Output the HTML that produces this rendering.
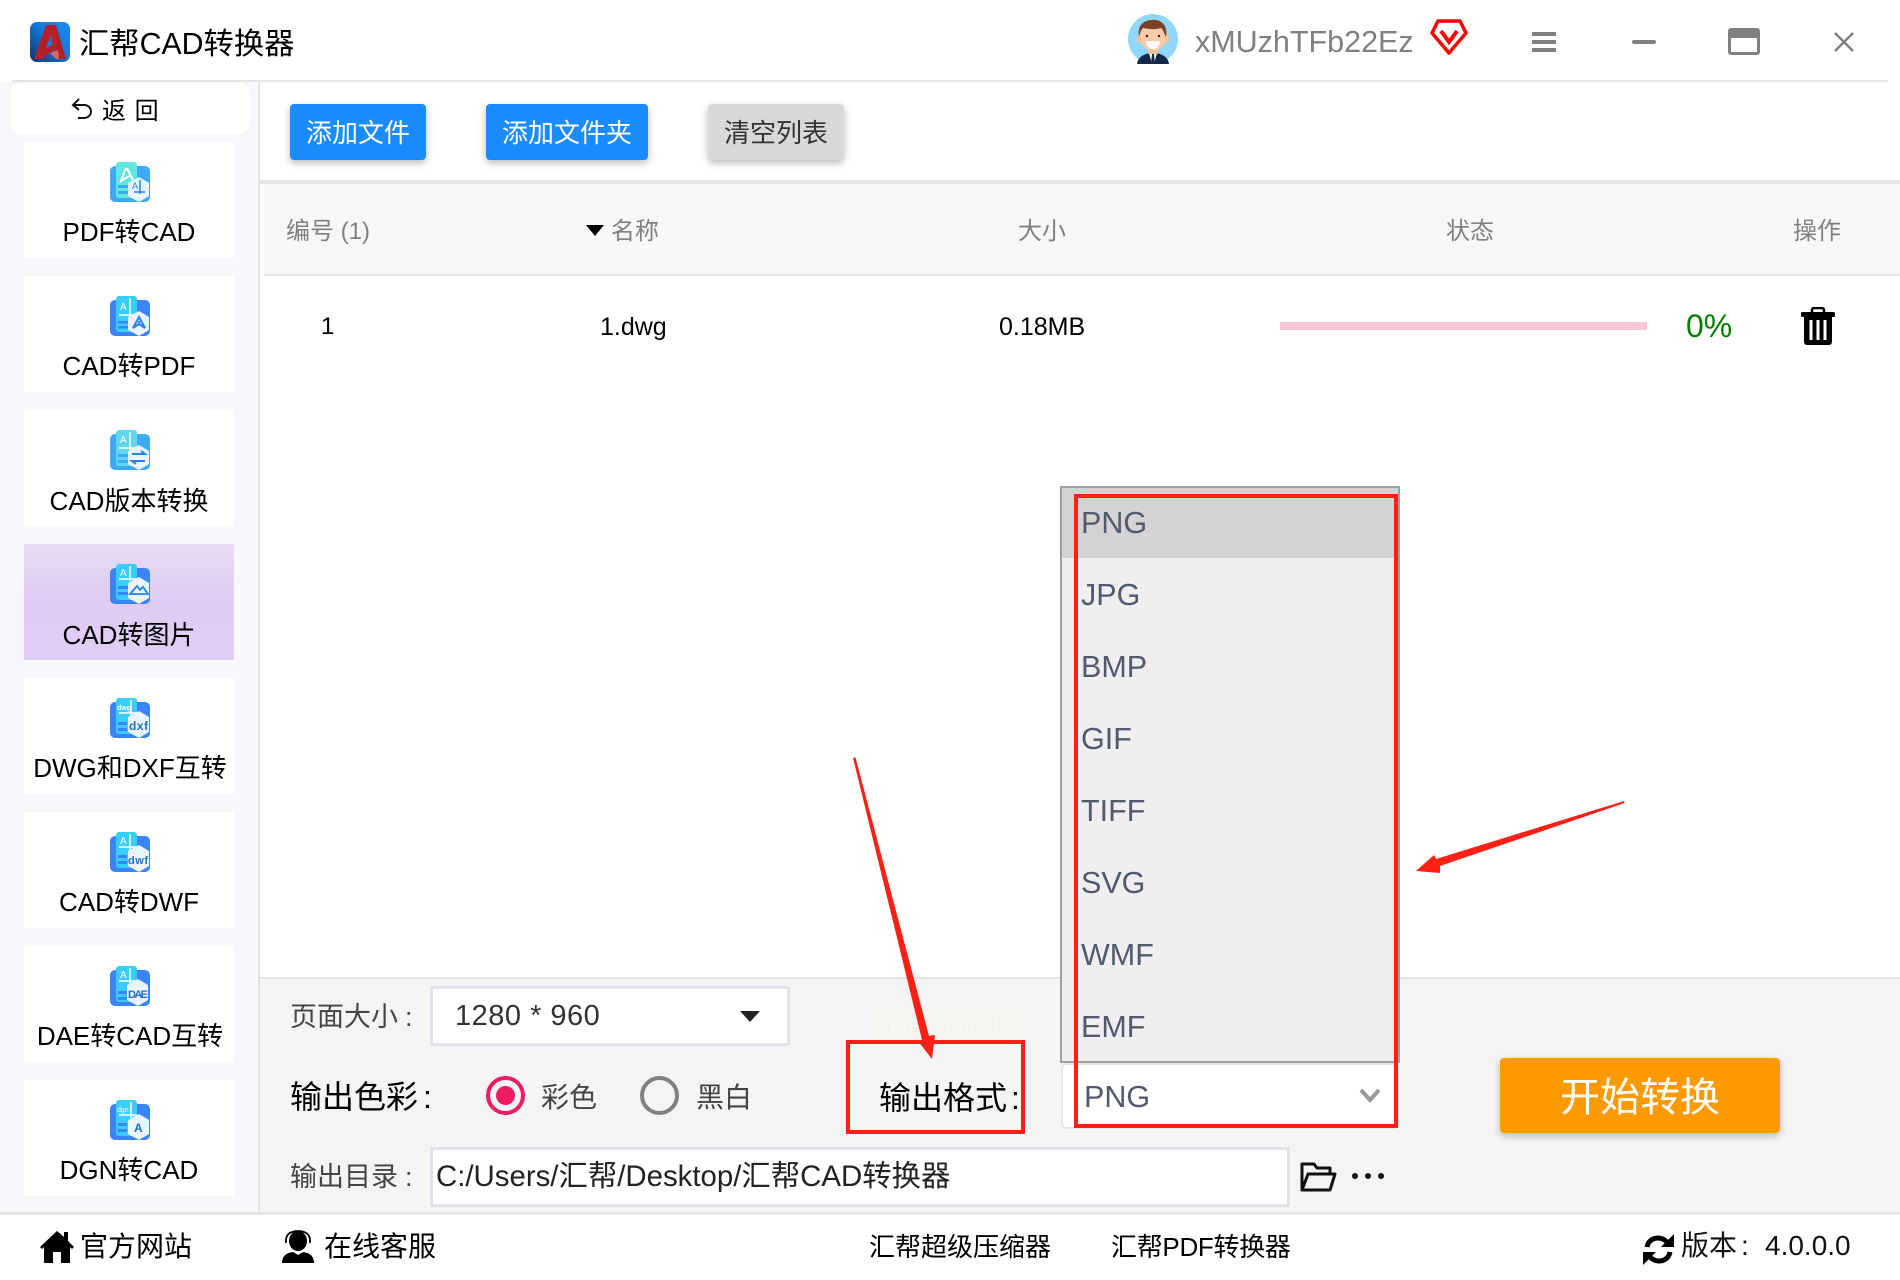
<!DOCTYPE html>
<html lang="zh-CN">
<head>
<meta charset="utf-8">
<title>汇帮CAD转换器</title>
<style>
html,body{margin:0;padding:0}
body{width:1900px;height:1280px;position:relative;overflow:hidden;background:#fff;font-family:"Liberation Sans","Noto Sans CJK SC",sans-serif;color:#000}
.a{position:absolute}
.t{position:absolute;white-space:nowrap;line-height:40px;height:40px}
.item{position:absolute;left:24px;width:210px;height:116px;background:#fff}
.item svg{position:absolute;left:86px;top:20px}
.item div{position:absolute;left:0;width:100%;top:70px;text-align:center;font-size:26px;line-height:40px;white-space:nowrap;color:#000}
.btn{position:absolute;top:104px;height:56px;border-radius:4px;line-height:58px;text-align:center;font-size:26px;box-shadow:0 3px 8px rgba(0,0,0,.28)}
.opt{position:absolute;left:1081px;font-size:30.5px;line-height:40px;color:#515a6e}
.h{color:#808080;font-size:24px}
</style>
</head>
<body>
<!-- Title bar -->
<svg class="a" style="left:30px;top:22px" width="40" height="40" viewBox="0 0 40 40">
<defs><linearGradient id="lg" x1="0" y1="1" x2="1" y2="0"><stop offset="0" stop-color="#07376b"/><stop offset=".55" stop-color="#1678dc"/><stop offset="1" stop-color="#1a8bf5"/></linearGradient></defs>
<rect width="40" height="40" rx="7" fill="url(#lg)"/>
<path d="M16 3h10l10 34H26l-2-9-5 3-6 6H4z" fill="#b3202a"/>
<path d="M21 13l-5 13 6-3z" fill="#1a7ee0"/>
<path d="M20 31l8-3 1 9h-3z" fill="#d9685f"/>
</svg>
<div class="t" style="left:79px;top:25px;font-size:30.3px">汇帮CAD转换器</div>

<svg class="a" style="left:1128px;top:14px" width="50" height="50" viewBox="0 0 50 50">
<circle cx="25" cy="25" r="25" fill="#8fd8fb"/>
<path d="M9 50c1-7 6-9 12-11h8c6 2 11 4 12 11z" fill="#13294b"/>
<path d="M21 39h8l-3 11h-2z" fill="#fff"/><path d="M24 40h2l1 10h-4z" fill="#13294b"/>
<rect x="20" y="31" width="10" height="9" fill="#f5bf9c"/>
<ellipse cx="25" cy="23" rx="13" ry="14" fill="#fbcaa8"/>
<rect x="9" y="21" width="4" height="8" rx="2" fill="#f5bf9c"/><rect x="37" y="21" width="4" height="8" rx="2" fill="#f5bf9c"/>
<path d="M11 23c-2-11 4-17 13-17 9-1 16 5 14 17-2-4-3-8-5-9-6 2-13 1-18 0-2 2-3 5-4 9z" fill="#7a4126"/>
<path d="M18 27h14c0 5-3 8-7 8s-7-3-7-8z" fill="#fff"/>
<circle cx="19" cy="22" r="1.2" fill="#3b2314"/><circle cx="31" cy="22" r="1.2" fill="#3b2314"/>
</svg>
<div class="t" style="left:1195px;top:22px;font-size:30.5px;color:#808080">xMUzhTFb22Ez</div>
<svg class="a" style="left:1430px;top:19px" width="38" height="36" viewBox="0 0 38 36">
<path d="M8 2h22l6 12-17 20L2 14z" fill="#fff" stroke="#ff0000" stroke-width="3.5" stroke-linejoin="round"/>
<path d="M11 12l8 11 8-11" fill="none" stroke="#ff0000" stroke-width="4"/>
</svg>
<div class="a" style="left:1532px;top:32px;width:24px;height:4px;background:#808080"></div>
<div class="a" style="left:1532px;top:40px;width:24px;height:4px;background:#808080"></div>
<div class="a" style="left:1532px;top:48px;width:24px;height:4px;background:#808080"></div>
<div class="a" style="left:1632px;top:40px;width:24px;height:4px;border-radius:2px;background:#808080"></div>
<div class="a" style="left:1728px;top:28px;width:26px;height:14px;border:3px solid #808080;border-top-width:10px;border-radius:3px"></div>
<svg class="a" style="left:1834px;top:32px" width="20" height="20" viewBox="0 0 20 20"><path d="M1 1l18 18M19 1L1 19" stroke="#808080" stroke-width="2.6"/></svg>
<div class="a" style="left:12px;top:80px;width:1876px;height:2px;background:#e5e5e5"></div>

<!-- Sidebar -->
<div class="a" style="left:0;top:82px;width:258px;height:1131px;background:#f6f8fc"></div>
<div class="a" style="left:258px;top:82px;width:2px;height:1131px;background:#e3e3e3"></div>
<div class="a" style="left:10px;top:83px;width:240px;height:51px;background:#fff;border-radius:10px"></div>
<svg class="a" style="left:70px;top:97px" width="24" height="26" viewBox="0 0 24 26"><path d="M9 2L3 8l6 5M3 8h11c4 0 7 3 7 6.500S18 21 14 21H8" fill="none" stroke="#111" stroke-width="2"/></svg>
<div class="t" style="left:102px;top:92px;font-size:24px;word-spacing:2px">返 回</div>

<div class="item" style="top:142px"><svg width="40" height="40" viewBox="0 0 40 40"><rect y="4" width="40" height="36" rx="5" fill="#3ea9f7"/><path d="M8 0h16a3 3 0 0 1 3 3v33H9a3 3 0 0 1-3-3V2z" fill="#5fe8de"/><path d="M17 6l6 12M16 6l-5 13 10-6" fill="none" stroke="#fff" stroke-width="2"/><rect x="8" y="23" width="10" height="3" fill="#3ea9f7"/><rect x="8" y="29" width="10" height="3" fill="#3ea9f7"/><path d="M29 15l10 6v13l-10 6-11-6V21z" fill="#eaf4ff"/><path d="M30 18v14M24 30h11" stroke="#2a80ec" stroke-width="1.500"/><text x="22" y="27" font-size="9" fill="#2a80ec" font-family="Liberation Sans">A</text></svg><div>PDF转CAD</div></div>
<div class="item" style="top:276px"><svg width="40" height="40" viewBox="0 0 40 40"><rect y="4" width="40" height="36" rx="5" fill="#3a84f8"/><path d="M8 0h16a3 3 0 0 1 3 3v33H9a3 3 0 0 1-3-3V2z" fill="#38cdfa"/><path d="M20 2v20M9 19h18" stroke="#fff" stroke-width="1.500"/><text x="10" y="14" font-size="10" fill="#fff" font-family="Liberation Sans">A</text><rect x="8" y="25" width="10" height="2.500" fill="#3a84f8"/><rect x="8" y="30" width="10" height="2.500" fill="#3a84f8"/><path d="M29 15l10 6v13l-10 6-11-6V21z" fill="#eaf4ff"/><path d="M29 21l-6 11 6-4 6 4zM29 25v4" fill="none" stroke="#2a80ec" stroke-width="2"/></svg><div>CAD转PDF</div></div>
<div class="item" style="top:410px"><svg width="40" height="40" viewBox="0 0 40 40"><rect y="4" width="40" height="36" rx="5" fill="#3ea9f7"/><path d="M8 0h16a3 3 0 0 1 3 3v33H9a3 3 0 0 1-3-3V2z" fill="#5fd8ee"/><path d="M20 2v18M9 18h18" stroke="#fff" stroke-width="1.500"/><text x="10" y="13" font-size="10" fill="#fff" font-family="Liberation Sans">A</text><rect x="8" y="24" width="10" height="3" fill="#3ea9f7"/><rect x="8" y="30" width="10" height="3" fill="#3ea9f7"/><path d="M29 15l10 6v13l-10 6-11-6V21z" fill="#eaf4ff"/><path d="M22 24h13l-4-3M35 31H22l4 3" fill="none" stroke="#2a80ec" stroke-width="2"/></svg><div style="top:71px">CAD版本转换</div></div>
<div class="item" style="top:544px;background:linear-gradient(180deg,#e7dcf0 0%,#dfcbf3 50%,#e1cef4 100%)"><svg width="40" height="40" viewBox="0 0 40 40"><rect y="4" width="40" height="36" rx="5" fill="#3a84f8"/><path d="M8 0h16a3 3 0 0 1 3 3v33H9a3 3 0 0 1-3-3V2z" fill="#38cdfa"/><path d="M20 2v15M9 15h18" stroke="#fff" stroke-width="1.500"/><text x="10" y="12" font-size="10" fill="#fff" font-family="Liberation Sans">A</text><rect x="8" y="22" width="10" height="3" fill="#3a84f8"/><rect x="8" y="28" width="10" height="3" fill="#3a84f8"/><path d="M29 13l10 6v15l-10 6-11-6V19z" fill="#eaf4ff"/><path d="M20 30l7-8 3 4 3-3 5 7z" fill="none" stroke="#2a80ec" stroke-width="1.800"/></svg><div style="top:71px">CAD转图片</div></div>
<div class="item" style="top:678px"><svg width="40" height="40" viewBox="0 0 40 40"><rect y="4" width="40" height="36" rx="5" fill="#3a84f8"/><path d="M8 0h16a3 3 0 0 1 3 3v33H9a3 3 0 0 1-3-3V2z" fill="#38cdfa"/><path d="M21 2v16M9 15h18" stroke="#fff" stroke-width="1.500"/><text x="7" y="12" font-size="7" font-weight="bold" fill="#fff" font-family="Liberation Sans">dwg</text><rect x="8" y="24" width="9" height="3" fill="#3a84f8"/><rect x="8" y="30" width="9" height="3" fill="#3a84f8"/><path d="M29 13l10 6v15l-10 6-11-6V19z" fill="#eaf4ff"/><text x="19" y="32" font-size="12" font-weight="bold" fill="#1f6fc8" font-family="Liberation Sans" textLength="19">dxf</text></svg><div style="left:1px">DWG和DXF互转</div></div>
<div class="item" style="top:812px"><svg width="40" height="40" viewBox="0 0 40 40"><rect y="4" width="40" height="36" rx="5" fill="#3a84f8"/><path d="M8 0h16a3 3 0 0 1 3 3v33H9a3 3 0 0 1-3-3V2z" fill="#38cdfa"/><path d="M20 2v16M9 15h18" stroke="#fff" stroke-width="1.500"/><text x="10" y="12" font-size="10" fill="#fff" font-family="Liberation Sans">A</text><rect x="8" y="23" width="9" height="3" fill="#3a84f8"/><rect x="8" y="29" width="9" height="3" fill="#3a84f8"/><path d="M29 13l10 6v15l-10 6-11-6V19z" fill="#eaf4ff"/><text x="18" y="32" font-size="11" font-weight="bold" fill="#1f6fc8" font-family="Liberation Sans" textLength="20">dwf</text></svg><div>CAD转DWF</div></div>
<div class="item" style="top:946px"><svg width="40" height="40" viewBox="0 0 40 40"><rect y="4" width="40" height="36" rx="5" fill="#3a84f8"/><path d="M8 0h16a3 3 0 0 1 3 3v33H9a3 3 0 0 1-3-3V2z" fill="#38cdfa"/><path d="M20 2v16M9 15h18" stroke="#fff" stroke-width="1.500"/><text x="10" y="12" font-size="10" fill="#fff" font-family="Liberation Sans">A</text><rect x="8" y="25" width="9" height="3" fill="#3a84f8"/><rect x="8" y="31" width="9" height="3" fill="#3a84f8"/><path d="M28 13l10 6v15l-10 6-11-6V19z" fill="#eaf4ff"/><text x="18" y="32" font-size="11" font-weight="bold" fill="#1f6fc8" font-family="Liberation Sans" textLength="20">DAE</text></svg><div style="left:1px">DAE转CAD互转</div></div>
<div class="item" style="top:1080px"><svg width="40" height="40" viewBox="0 0 40 40"><rect y="4" width="40" height="36" rx="5" fill="#3a84f8"/><path d="M8 0h16a3 3 0 0 1 3 3v33H9a3 3 0 0 1-3-3V2z" fill="#38cdfa"/><path d="M21 2v16M9 15h18" stroke="#fff" stroke-width="1.500"/><text x="7" y="12" font-size="7" fill="#fff" font-family="Liberation Sans">dgn</text><rect x="8" y="23" width="9" height="3" fill="#3a84f8"/><rect x="8" y="29" width="9" height="3" fill="#3a84f8"/><path d="M29 14l10 6v14l-10 6-11-6V20z" fill="#eaf4ff"/><text x="24" y="32" font-size="12" font-weight="bold" fill="#1f6fc8" font-family="Liberation Sans">A</text></svg><div>DGN转CAD</div></div>

<!-- Toolbar -->
<div class="btn" style="left:290px;width:136px;background:#1a8cff;color:#fff">添加文件</div>
<div class="btn" style="left:486px;width:162px;background:#1a8cff;color:#fff">添加文件夹</div>
<div class="btn" style="left:708px;width:136px;background:#d7d8d8;color:#333">清空列表</div>
<div class="a" style="left:260px;top:180px;width:1640px;height:4px;background:#e5e5e5"></div>

<!-- Table -->
<div class="a" style="left:264px;top:184px;width:1636px;height:90px;background:#f7f7f7"></div>
<div class="a" style="left:264px;top:274px;width:1636px;height:2px;background:#e5e5e5"></div>
<div class="t h" style="left:286px;top:212px">编号 (1)</div>
<div class="a" style="left:586px;top:225px;width:0;height:0;border-left:9.500px solid transparent;border-right:9.500px solid transparent;border-top:11px solid #000"></div>
<div class="t h" style="left:611px;top:212px">名称</div>
<div class="t h" style="left:1018px;top:212px">大小</div>
<div class="t h" style="left:1446px;top:212px">状态</div>
<div class="t h" style="left:1793px;top:212px">操作</div>
<div class="t" style="left:321px;top:307px;font-size:24px">1</div>
<div class="t" style="left:600px;top:307px;font-size:25px">1.dwg</div>
<div class="t" style="left:999px;top:307px;font-size:25px">0.18MB</div>
<div class="a" style="left:1280px;top:322px;width:367px;height:8px;background:#f9c6d9"></div>
<div class="t" style="left:1686px;top:306px;font-size:32px;color:#008000">0%</div>
<svg class="a" style="left:1801px;top:307px" width="34" height="38" viewBox="0 0 34 38">
<path d="M11 5V3a2 2 0 0 1 2-2h8a2 2 0 0 1 2 2v2" fill="none" stroke="#000" stroke-width="2.500"/>
<rect x="0" y="5" width="34" height="5" rx="1.500" fill="#000"/>
<path d="M3 10h28v25a3 3 0 0 1-3 3H6a3 3 0 0 1-3-3z" fill="#000"/>
<rect x="8.500" y="13" width="3" height="20" fill="#fff"/><rect x="15.500" y="13" width="3" height="20" fill="#fff"/><rect x="22.500" y="13" width="3" height="20" fill="#fff"/>
</svg>

<!-- Bottom panel -->
<div class="a" style="left:260px;top:977px;width:1640px;height:236px;background:#f4f4f4;border-top:2px solid #e3e3e3;box-sizing:border-box"></div>
<div class="t" style="left:290px;top:997px;font-size:27px;color:#444">页面大小<span style="margin-left:7px">:</span></div>
<div class="a" style="left:430px;top:986px;width:360px;height:60px;background:#fff;border:3px solid #e2e2ea;box-sizing:border-box"></div>
<div class="t" style="left:455px;top:996px;font-size:29px;letter-spacing:.5px;color:#333">1280 * 960</div>
<div class="a" style="left:740px;top:1011px;width:0;height:0;border-left:10px solid transparent;border-right:10px solid transparent;border-top:11px solid #222"></div>
<div class="t" style="left:290px;top:1077px;font-size:32px">输出色彩<span style="margin-left:5px">:</span></div>
<div class="a" style="left:486px;top:1076px;width:39px;height:39px;border:4px solid #ee1d62;border-radius:50%;box-sizing:border-box"></div>
<div class="a" style="left:496px;top:1086px;width:19px;height:19px;background:#ee1d62;border-radius:50%"></div>
<div class="t" style="left:541px;top:1078px;font-size:28px;color:#444">彩色</div>
<div class="a" style="left:640px;top:1076px;width:39px;height:39px;border:4px solid #808080;border-radius:50%;box-sizing:border-box"></div>
<div class="t" style="left:696px;top:1078px;font-size:28px;color:#444">黑白</div>
<div class="t" style="left:290px;top:1157px;font-size:27px;color:#444">输出目录<span style="margin-left:7px">:</span></div>
<div class="a" style="left:430px;top:1147px;width:860px;height:60px;background:#fff;border:3px solid #e2e2ea;box-sizing:border-box"></div>
<div class="t" style="left:436px;top:1157px;font-size:29.4px;color:#222">C:/Users/汇帮/Desktop/汇帮CAD转换器</div>
<svg class="a" style="left:1300px;top:1161px" width="37" height="31" viewBox="0 0 37 31">
<path d="M2 29V3h12l3 4h13v6M2 29l6-16h27l-5 16z" fill="none" stroke="#111" stroke-width="3" stroke-linejoin="round"/>
</svg>
<div class="a" style="left:1352px;top:1173px;width:6px;height:6px;border-radius:50%;background:#111"></div>
<div class="a" style="left:1365px;top:1173px;width:6px;height:6px;border-radius:50%;background:#111"></div>
<div class="a" style="left:1378px;top:1173px;width:6px;height:6px;border-radius:50%;background:#111"></div>

<!-- Output format -->
<div class="a" style="left:872px;top:1008px;width:156px;height:32px;background:#f5f5f2"></div>
<div class="t" style="left:882px;top:1007px;font-size:24px;font-family:'Liberation Serif',serif;color:#f1f1ee">1765265928</div>
<div class="t" style="left:879px;top:1078px;font-size:32px">输出格式<span style="margin-left:4px">:</span></div>
<div class="a" style="left:1061px;top:1063px;width:338px;height:66px;background:#fff;border:2px solid #e6e6ea;border-radius:6px;box-sizing:border-box"></div>
<div class="t" style="left:1084px;top:1077px;font-size:30.5px;color:#515a6e">PNG</div>
<svg class="a" style="left:1359px;top:1087px" width="22" height="16" viewBox="0 0 22 16"><path d="M2 3l9 10 9-10" fill="none" stroke="#999" stroke-width="4"/></svg>

<!-- Dropdown -->
<div class="a" style="left:1060px;top:486px;width:340px;height:577px;background:#efefef;border:2px solid #a0a0a0;box-sizing:border-box"></div>
<div class="a" style="left:1062px;top:488px;width:336px;height:70px;background:#d3d3d3"></div>
<div class="opt" style="top:503px">PNG</div>
<div class="opt" style="top:575px">JPG</div>
<div class="opt" style="top:647px">BMP</div>
<div class="opt" style="top:719px">GIF</div>
<div class="opt" style="top:791px">TIFF</div>
<div class="opt" style="top:863px">SVG</div>
<div class="opt" style="top:935px">WMF</div>
<div class="opt" style="top:1007px">EMF</div>

<!-- Start button -->
<div class="a" style="left:1500px;top:1058px;width:280px;height:75px;background:#ff9900;border-radius:4px;box-shadow:0 3px 8px rgba(0,0,0,.25);color:#fff;font-size:40px;line-height:80px;text-align:center">开始转换</div>

<!-- Annotations -->
<div class="a" style="left:846px;top:1040px;width:179px;height:94px;border:4px solid #ff2015;box-sizing:border-box"></div>
<div class="a" style="left:1074px;top:494px;width:324px;height:634px;border:4px solid #ff2015;box-sizing:border-box"></div>
<svg class="a" style="left:0;top:0" width="1900" height="1280" viewBox="0 0 1900 1280">
<path d="M853 758L855.500 757.500 929 1036 935 1035 932 1059 918 1041 922 1040z" fill="#ff2015"/>
<path d="M1624 801L1624.500 803 1440 866 1440 873 1416 871 1434 855 1436 859z" fill="#ff2015"/>
</svg>

<!-- Footer -->
<div class="a" style="left:0;top:1212px;width:1900px;height:3px;background:#e5e5e5"></div>
<svg class="a" style="left:40px;top:1229px" width="34" height="34" viewBox="0 0 34 34">
<path d="M17 2L0 18l2 2 2-2v16h9V23h8v11h9V18l2 2 2-2-6-6V3h-4v5z" fill="#000"/>
</svg>
<div class="t" style="left:80px;top:1227px;font-size:28px">官方网站</div>
<svg class="a" style="left:282px;top:1230px" width="32" height="33" viewBox="0 0 32 33">
<ellipse cx="16" cy="11" rx="9" ry="10" fill="#000"/>
<path d="M4 13C3 4 9 1 16 1s13 3 12 12" fill="none" stroke="#000" stroke-width="1.800"/>
<path d="M0 33c0-7 4-10 11-11l5 3 5-3c7 1 11 4 11 11z" fill="#000"/>
</svg>
<div class="t" style="left:324px;top:1227px;font-size:28px">在线客服</div>
<div class="t" style="left:869px;top:1227px;font-size:26px">汇帮超级压缩器</div>
<div class="t" style="left:1111px;top:1227px;font-size:26px;letter-spacing:-.3px">汇帮PDF转换器</div>
<svg class="a" style="left:1642px;top:1233px" width="33" height="33" viewBox="0 0 33 33">
<path d="M5 14C6 8 11 5 16 5c4 0 7 2 9 4" fill="none" stroke="#000" stroke-width="5"/>
<path d="M32 1v13H19z" fill="#000"/>
<path d="M28 19c-1 6-6 9-11 9-4 0-7-2-9-4" fill="none" stroke="#000" stroke-width="5"/>
<path d="M1 32V19h13z" fill="#000"/>
</svg>
<div class="t" style="left:1681px;top:1226px;font-size:28px;color:#111">版本<span style="margin-left:4px">:</span></div>
<div class="t" style="left:1765px;top:1226px;font-size:28px;color:#111">4.0.0.0</div>
</body>
</html>
